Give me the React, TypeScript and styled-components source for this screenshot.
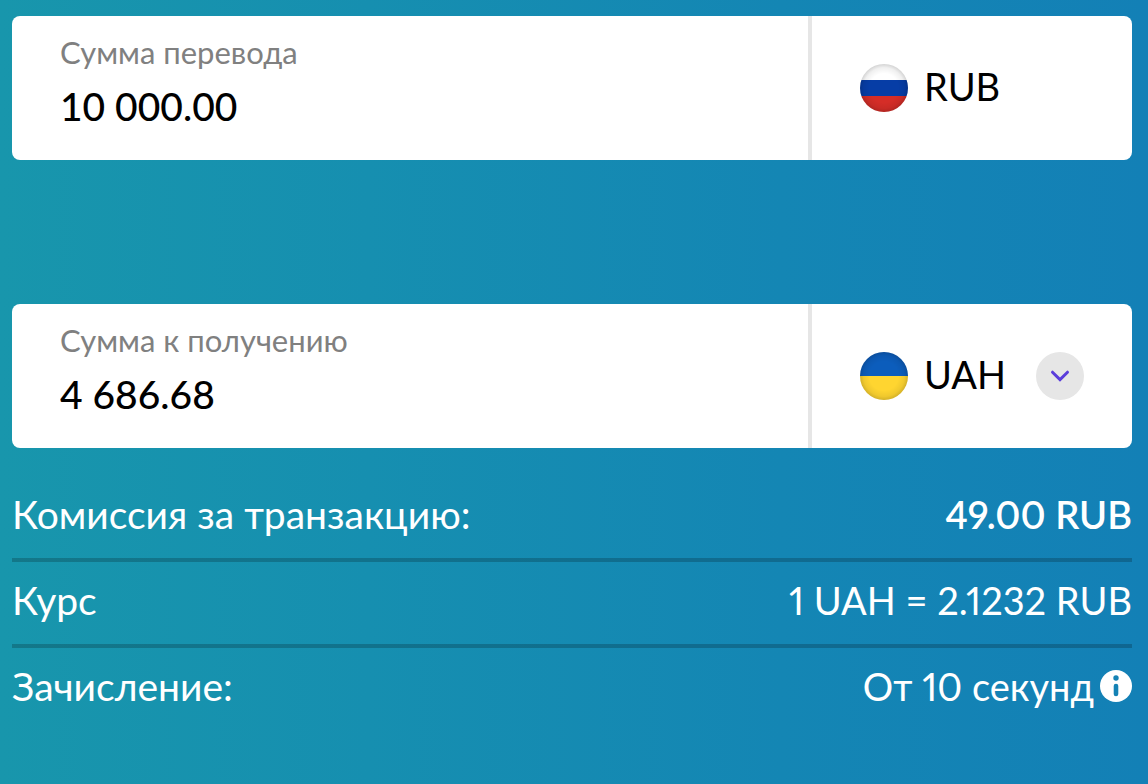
import React, { useState } from "react";
import styled, { createGlobalStyle } from "styled-components";

const GlobalStyle = createGlobalStyle`
  *, *::before, *::after {
    box-sizing: border-box;
  }
  body {
    margin: 0;
    font-family: Lato, "Open Sans", sans-serif;
    color: #000;
  }
`;

const Page = styled.main`
  min-height: 100vh;
  padding: 16px 16px 32px 12px;
  background: linear-gradient(90deg, #1896ac 0%, #168fb0 32%, #1486b4 68%, #1380b6 100%);
`;

const Form = styled.form`
  display: flex;
  flex-direction: column;
  gap: 144px;
`;

const Card = styled.div`
  display: flex;
  min-height: 144px;
  border-radius: 8px;
  background: #fff;
  overflow: hidden;
`;

const AmountField = styled.div`
  flex: 1;
  min-width: 0;
  display: flex;
  flex-direction: column;
  padding: 16px 24px 0 48px;
`;

const AmountLabel = styled.label`
  font-size: 31px;
  line-height: 40px;
  color: #808080;
`;

const AmountInput = styled.input`
  width: 100%;
  height: 68px;
  padding: 0;
  border: 0;
  outline: 0;
  background: transparent;
  font: 500 39px/68px Lato, "Open Sans", sans-serif;
  color: #000;
`;

const CurrencyCell = styled.div`
  flex: 0 0 324px;
  display: grid;
  grid-template-columns: 48px 1fr 48px;
  column-gap: 16px;
  align-items: center;
  padding: 0 48px;
  border-left: 4px solid #e6e6e6;
`;

const Flag = styled.svg`
  grid-column: 1;
  grid-row: 1;
  width: 48px;
  height: 48px;
  z-index: 1;
  pointer-events: none;
`;

const CurrencyCode = styled.span`
  grid-column: 2;
  grid-row: 1;
  padding-bottom: 4px;
  font-size: 38px;
  line-height: 44px;
`;

const CurrencySelect = styled.select`
  grid-column: 1 / -1;
  grid-row: 1;
  width: 100%;
  height: 48px;
  padding: 0 64px 4px;
  border: 0;
  outline: 0;
  appearance: none;
  background: transparent;
  font: 400 38px/44px Lato, "Open Sans", sans-serif;
  color: #000;
  cursor: pointer;
`;

const Arrow = styled.span`
  grid-column: 3;
  grid-row: 1;
  display: flex;
  align-items: center;
  justify-content: center;
  width: 48px;
  height: 48px;
  border-radius: 50%;
  background: #e6e6e6;
  pointer-events: none;
`;

const Details = styled.dl`
  margin: 28px 0 0;
`;

const DetailRow = styled.div`
  display: flex;
  align-items: center;
  justify-content: space-between;
  min-height: 86px;
  padding-bottom: 6px;
  border-bottom: 4px solid rgba(0, 0, 0, 0.2);
  font-size: 39px;
  line-height: 48px;
  color: #fff;

  &:last-child {
    border-bottom-color: transparent;
  }
`;

const DetailName = styled.dt`
  margin: 0;
`;

const DetailValue = styled.dd<{ $strong?: boolean }>`
  display: flex;
  align-items: center;
  gap: 6px;
  margin: 0;
  font-size: 38px;
  font-weight: ${({ $strong }) => ($strong ? 600 : 400)};
  font-variant-numeric: proportional-nums;
`;

const InfoButton = styled.button`
  display: flex;
  padding: 0;
  border: 0;
  background: none;
  color: #fff;
  cursor: pointer;
`;

type FlagProps = { id: string; stripes: string[] };

function RoundFlag({ id, stripes }: FlagProps) {
  const height = 48 / stripes.length;
  return (
    <Flag viewBox="0 0 48 48" aria-hidden="true">
      <defs>
        <clipPath id={`${id}-clip`}>
          <circle cx="24" cy="24" r="24" />
        </clipPath>
        <radialGradient id={`${id}-shade`} cx="0.5" cy="0.5" r="0.5">
          <stop offset="0.6" stopColor="#000" stopOpacity="0" />
          <stop offset="0.85" stopColor="#000" stopOpacity="0.06" />
          <stop offset="1" stopColor="#000" stopOpacity="0.17" />
        </radialGradient>
      </defs>
      <g clipPath={`url(#${id}-clip)`}>
        {stripes.map((fill, i) => (
          <rect key={fill} y={i * height} width="48" height={height} fill={fill} />
        ))}
        <rect width="48" height="48" fill={`url(#${id}-shade)`} />
      </g>
    </Flag>
  );
}

export default function App() {
  const [sent, setSent] = useState("10 000.00");
  const [received, setReceived] = useState("4 686.68");

  return (
    <Page>
      <GlobalStyle />
      <Form onSubmit={(e) => e.preventDefault()}>
        <Card>
          <AmountField>
            <AmountLabel htmlFor="sent">Сумма перевода</AmountLabel>
            <AmountInput id="sent" value={sent} onChange={(e) => setSent(e.target.value)} />
          </AmountField>
          <CurrencyCell>
            <RoundFlag id="ru" stripes={["#ffffff", "#063da6", "#d52d27"]} />
            <CurrencyCode>RUB</CurrencyCode>
          </CurrencyCell>
        </Card>
        <Card>
          <AmountField>
            <AmountLabel htmlFor="received">Сумма к получению</AmountLabel>
            <AmountInput
              id="received"
              value={received}
              onChange={(e) => setReceived(e.target.value)}
            />
          </AmountField>
          <CurrencyCell>
            <RoundFlag id="ua" stripes={["#0c5dbc", "#ffd530"]} />
            <CurrencySelect aria-label="Валюта получения" defaultValue="UAH">
              <option value="UAH">UAH</option>
            </CurrencySelect>
            <Arrow>
              <svg width="20" height="12" viewBox="0 0 20 12" fill="none" aria-hidden="true">
                <path
                  d="M2.5 2.2 10 9.6l7.500-7.400"
                  stroke="#5b3edb"
                  strokeWidth="3"
                  strokeLinecap="round"
                />
              </svg>
            </Arrow>
          </CurrencyCell>
        </Card>
      </Form>
      <Details>
        <DetailRow>
          <DetailName>Комиссия за транзакцию:</DetailName>
          <DetailValue $strong>49.00 RUB</DetailValue>
        </DetailRow>
        <DetailRow>
          <DetailName>Курс</DetailName>
          <DetailValue>1 UAH = 2.1232 RUB</DetailValue>
        </DetailRow>
        <DetailRow>
          <DetailName>Зачисление:</DetailName>
          <DetailValue>
            От 10 секунд
            <InfoButton type="button" aria-label="Подробнее о сроке зачисления">
              <svg width="32" height="32" viewBox="0 0 32 32" aria-hidden="true">
                <circle cx="16" cy="16" r="16" fill="currentColor" />
                <circle cx="16" cy="8" r="2.700" fill="#1482b5" />
                <path d="M16 16v8" stroke="#1482b5" strokeWidth="4.600" strokeLinecap="round" />
              </svg>
            </InfoButton>
          </DetailValue>
        </DetailRow>
      </Details>
    </Page>
  );
}
